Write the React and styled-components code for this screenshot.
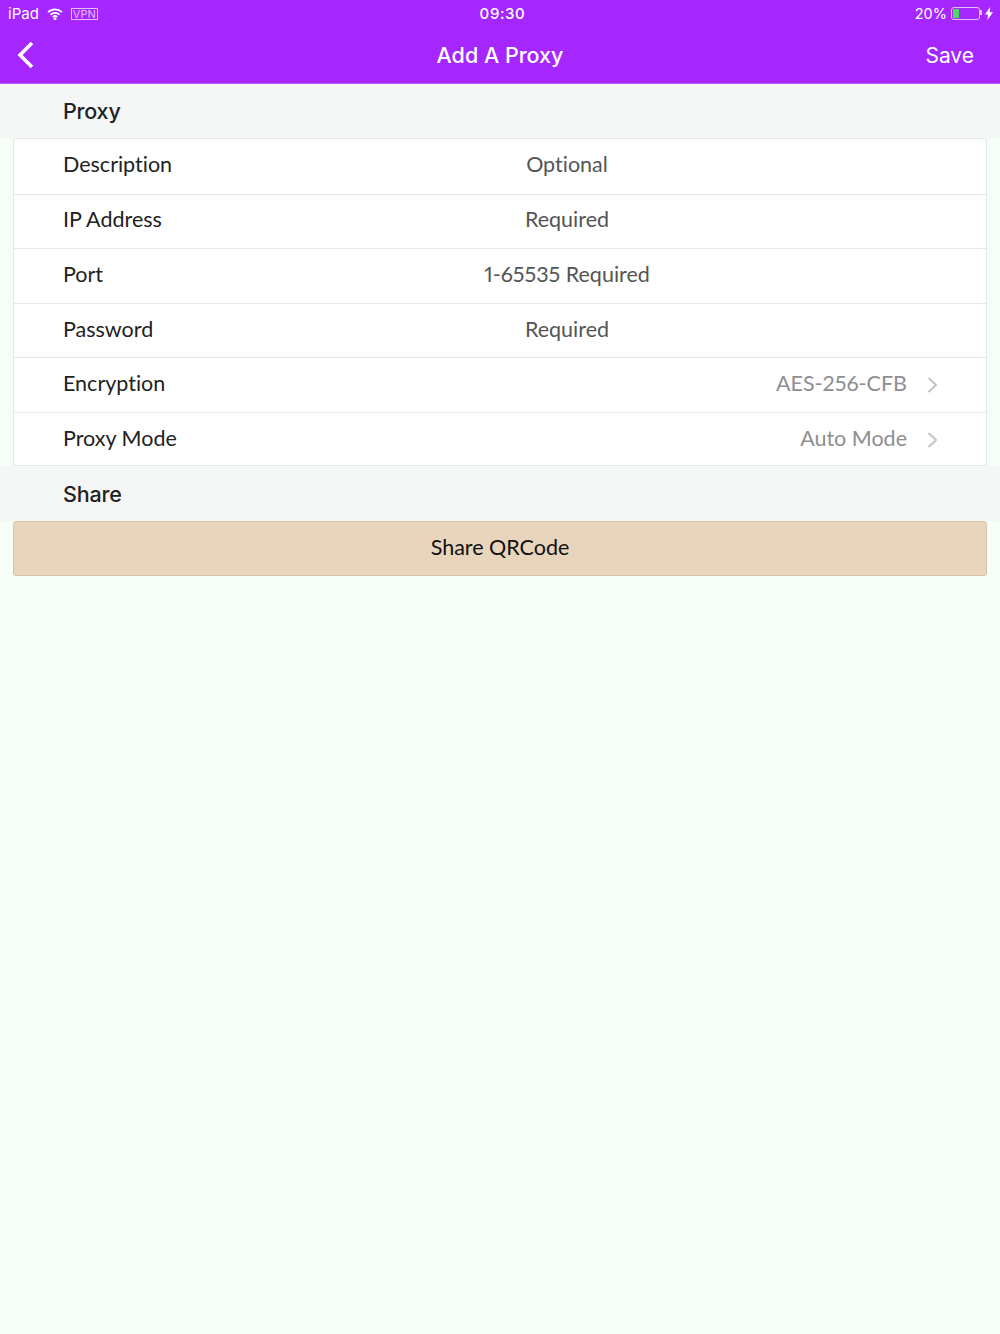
import React from 'react'
import styled, { createGlobalStyle } from 'styled-components'

const Global = createGlobalStyle`
  html, body {
    margin: 0;
    padding: 0;
    background: #f5fff8;
  }
  body {
    font-family: Lato, "Noto Sans", sans-serif;
    font-variant-ligatures: none;
    font-variant-numeric: proportional-nums;
  }
`

const Page = styled.div`
  width: 1000px;
  height: 1334px;
  overflow: hidden;
  background: #f5fff8;
  display: flex;
  flex-direction: column;
`

const Header = styled.header`
  height: 83px;
  background: #a526ff;
  border-bottom: 1px solid #bb5cff;
  color: #fff;
  font-family: Inter, "Liberation Sans", sans-serif;
`

const StatusBar = styled.div`
  height: 27px;
  padding: 0 7px 0 8px;
  display: grid;
  grid-template-columns: 1fr auto 1fr;
  align-items: center;
  font-size: 15px;
`

const StatusLeft = styled.div`
  display: flex;
  align-items: center;
  gap: 8px;
`

const StatusRight = styled.div`
  display: flex;
  align-items: center;
  justify-content: flex-end;
  gap: 4px;
`

const Percent = styled.span`
  font-size: 14.5px;
`

const Clock = styled.div`
  font-weight: 500;
  letter-spacing: 0.6px;
  padding-left: 4px;
`

const VpnBadge = styled.span`
  border: 1px solid #e3bdff;
  color: #e3bdff;
  font-size: 11px;
  line-height: 10px;
  padding: 0 1px;
`

const Battery = styled.div`
  width: 25px;
  height: 9px;
  border: 1px solid #e3bdff;
  border-radius: 3px;
  padding: 1px;
  display: flex;
  position: relative;
  &::after {
    content: '';
    position: absolute;
    right: -3px;
    top: 2px;
    width: 2px;
    height: 5px;
    background: #e3bdff;
  }
`

const BatteryFill = styled.div`
  width: 6px;
  background: #4cd964;
`

const Bolt = styled.svg`
  width: 8px;
  height: 13px;
  margin-left: 1px;
`

const NavBar = styled.div`
  height: 56px;
  padding: 0 26px;
  display: grid;
  grid-template-columns: 1fr auto 1fr;
  align-items: center;
`

const BackIcon = styled.svg`
  width: 20px;
  height: 28px;
  margin-left: -10px;
`

const Title = styled.div`
  font-size: 21.5px;
  font-weight: 500;
`

const Save = styled.div`
  font-size: 21px;
  text-align: right;
`

const SectionTitle = styled.div`
  height: ${p => p.$height}px;
  background: #f5f7f7;
  padding-left: 63px;
  display: flex;
  align-items: center;
  font-family: Inter, "Liberation Sans", sans-serif;
  font-size: 21.5px;
  font-weight: 500;
  letter-spacing: -0.2px;
  color: #202224;
`

const Card = styled.div`
  margin: 0 13px;
  background: #fff;
  border: 1px solid #e4e8e8;
  border-radius: 3px;
  height: 328px;
  box-sizing: border-box;
  display: flex;
  flex-direction: column;
`

const Row = styled.div`
  flex: none;
  height: 54.6px;
  box-sizing: border-box;
  padding: 0 48px 4px 49px;
  display: grid;
  grid-template-columns: 200px 1fr;
  align-items: center;
  font-size: 21.5px;
  color: #222;
  & + & {
    border-top: 1px solid #e4e8e8;
  }
  &:last-child {
    height: 53px;
    padding-bottom: 1px;
  }
`

const Label = styled.div``

const Field = styled.div`
  color: #555;
  text-align: center;
  padding-right: 67px;
`

const Value = styled.div`
  color: #8e8e93;
  display: flex;
  justify-content: flex-end;
  align-items: center;
  gap: 20px;
`

const Chevron = styled.svg`
  width: 11px;
  height: 18px;
  margin-top: 3px;
  flex: none;
`

const ShareButton = styled.div`
  margin: 0 13px;
  height: 55px;
  box-sizing: border-box;
  padding-bottom: 4px;
  background: #e8d5bc;
  border: 1px solid #d5c3aa;
  border-radius: 3px;
  display: flex;
  align-items: center;
  justify-content: center;
  font-size: 21.5px;
  color: #111;
`

const rows = [
  { label: 'Description', field: 'Optional' },
  { label: 'IP Address', field: 'Required' },
  { label: 'Port', field: '1-65535 Required' },
  { label: 'Password', field: 'Required' },
  { label: 'Encryption', value: 'AES-256-CFB' },
  { label: 'Proxy Mode', value: 'Auto Mode' },
]

const App = () => {
  return (
    <Page>
      <Global />
      <Header>
        <StatusBar>
          <StatusLeft>
            <span>iPad</span>
            <svg width="16" height="12" viewBox="0 0 16 12" fill="none" stroke="#fff" strokeWidth="1.7">
              <path d="M1 4.2a10 10 0 0 1 14 0" />
              <path d="M3.4 6.7a6.6 6.6 0 0 1 9.2 0" />
              <path d="M5.8 9a3.2 3.2 0 0 1 4.4 0" />
              <circle cx="8" cy="10.8" r="0.6" fill="#fff" />
            </svg>
            <VpnBadge>VPN</VpnBadge>
          </StatusLeft>
          <Clock>09:30</Clock>
          <StatusRight>
            <Percent>20%</Percent>
            <Battery><BatteryFill /></Battery>
            <Bolt viewBox="0 0 8 13">
              <path d="M5 0 0 7.4h3L2.4 13 8 5.2H4.8z" fill="#fff" />
            </Bolt>
          </StatusRight>
        </StatusBar>
        <NavBar>
          <BackIcon viewBox="0 0 20 28" fill="none" stroke="#fff" strokeWidth="3.6">
            <path d="M16 2 4 14l12 12" />
          </BackIcon>
          <Title>Add A Proxy</Title>
          <Save>Save</Save>
        </NavBar>
      </Header>
      <SectionTitle $height={54}>Proxy</SectionTitle>
      <Card>
        {rows.map(r => (
          <Row key={r.label}>
            <Label>{r.label}</Label>
            {r.field ? (
              <Field>{r.field}</Field>
            ) : (
              <Value>
                {r.value}
                <Chevron viewBox="0 0 11 18" fill="none" stroke="#c4c4c8" strokeWidth="2">
                  <path d="M1.5 2 9 9l-7.5 7" />
                </Chevron>
              </Value>
            )}
          </Row>
        ))}
      </Card>
      <SectionTitle $height={55}>Share</SectionTitle>
      <ShareButton>Share QRCode</ShareButton>
    </Page>
  )
}

export default App
